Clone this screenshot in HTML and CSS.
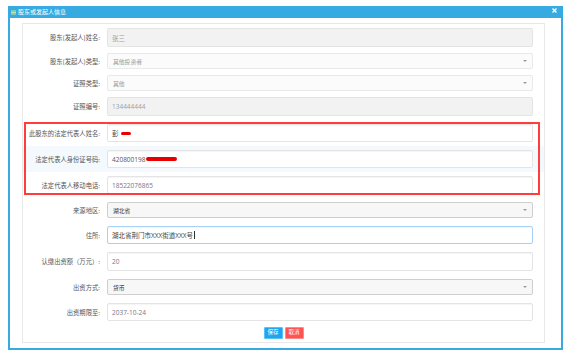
FILE: index.html
```html
<!DOCTYPE html>
<html lang="zh-CN">
<head>
<meta charset="utf-8">
<title>股东或发起人信息</title>
<link rel="stylesheet" href="styles.css">
</head>
<body>
<div class="dialog">
  <div class="titlebar">
    <svg class="title-icon" width="5" height="5" viewBox="0 0 5 5"><rect x="0" y="0.5" width="5" height="1" fill="#c9e79b"/><rect x="0" y="2" width="5" height="1" fill="#c9e79b"/><rect x="0" y="3.5" width="5" height="1" fill="#c9e79b"/></svg>
    <span class="title">股东或发起人信息</span>
    <svg class="close" width="5" height="5" viewBox="0 0 5 5"><path d="M0.5 0.5L4.5 4.5M4.5 0.5L0.5 4.5" stroke="#fff" stroke-width="1.4"/></svg>
  </div>
  <div class="body">
    <div class="panel">
      <div class="block upper">
        <div class="row"><span class="label">股东(发起人)姓名:</span><div class="field ro tall">张三</div></div>
        <div class="row"><span class="label">股东(发起人)类型:</span><div class="field sel dis">其他投资者<i class="caret"></i></div></div>
        <div class="row"><span class="label">证照类型:</span><div class="field sel dis">其他<i class="caret"></i></div></div>
        <div class="row"><span class="label">证照编号:</span><div class="field ro tall">134444444</div></div>
      </div>
      <div class="block marked">
        <div class="row pad"><span class="label">此股东的法定代表人姓名:</span><div class="field txt dark">彭<span class="redact r1"></span></div></div>
        <div class="row pad hover"><span class="label">法定代表人身份证号码:</span><div class="field txt mid">420800198<span class="redact r2"></span></div></div>
        <div class="row pad"><span class="label">法定代表人移动电话:</span><div class="field txt">18522076865</div></div>
      </div>
      <div class="block lower">
        <div class="row"><span class="label">来源地区:</span><div class="field sel on">湖北省<i class="caret"></i></div></div>
        <div class="row"><span class="label">住所:</span><div class="field txt focus dark">湖北省荆门市XXX街道XXX号<span class="cursor"></span></div></div>
        <div class="row"><span class="label">认缴出资额（万元）:</span><div class="field txt tall">20</div></div>
        <div class="row"><span class="label">出资方式:</span><div class="field sel on">货币<i class="caret"></i></div></div>
        <div class="row"><span class="label">出资期限至:</span><div class="field txt">2037-10-24</div></div>
      </div>
      <div class="actions">
        <button class="btn save">保存</button>
        <button class="btn cancel">取消</button>
      </div>
    </div>
  </div>
</div>
</body>
</html>
```

FILE: styles.css
```css
html, body {
  margin: 0;
  padding: 0;
  background: #fff;
}
body {
  font-family: "Open Sans", "Noto Sans CJK SC", sans-serif;
  width: 571px;
  height: 354px;
  overflow: hidden;
}
.dialog {
  margin: 6px 0 0 8px;
  width: 555px;
}
.titlebar {
  height: 12px;
  background: #36aae1;
  display: flex;
  align-items: center;
  padding: 0 6px 0 3px;
  gap: 2px;
}
.title-icon {
  display: block;
  margin-top: 1px;
}
.title {
  color: #fff;
  font-size: 6px;
  line-height: 1;
  font-family: "Noto Sans CJK SC", sans-serif;
  flex: 1;
}
.close {
  display: block;
  margin-top: -3px;
}
.body {
  border: 2px solid #36aae1;
  border-top: 0;
  padding: 5px 16px 5px 12px;
}
.panel {
  border: 1px solid #e8e8e8;
  padding: 4px 0 3px 0;
}
.block {
  display: flex;
  flex-direction: column;
}
.upper { gap: 6px; }
.marked {
  position: relative;
  margin-top: 4px;
}
.marked::after {
  content: "";
  position: absolute;
  left: 1px;
  right: 4px;
  top: 2px;
  bottom: 3px;
  border: 2px solid #ff3d3d;
  pointer-events: none;
}
.lower {
  gap: 8px;
  margin-top: 4px;
}
.row {
  display: flex;
  align-items: center;
  gap: 7px;
  padding-right: 11px;
}
.row.pad {
  padding-top: 4px;
  padding-bottom: 4px;
}
.row.hover {
  background: #f3f9fd;
}
.label {
  width: 77px;
  flex: none;
  text-align: right;
  font-size: 6.3px;
  color: #555;
  font-family: "Noto Sans CJK SC", sans-serif;
  white-space: nowrap;
}
.field {
  flex: 1;
  height: 18px;
  box-sizing: border-box;
  border: 1px solid #e4e4e4;
  border-radius: 2px;
  display: flex;
  align-items: center;
  padding-left: 4px;
  font-size: 6.5px;
  color: #778;
  position: relative;
  font-family: "Open Sans", "Noto Sans CJK SC", sans-serif;
}
.field.tall { height: 19px; }
.field.ro {
  background: #f2f2f2;
  color: #a0a0a0;
}
.field.txt {
  background: #fff;
  box-shadow: inset 0 1px 1px rgba(0,0,0,0.04);
}
.field.dark { color: #444; }
.field.mid { color: #556; }
.field.focus {
  border-color: #a9d1f4;
}
.field.sel {
  height: 16px;
  font-size: 5.8px;
  padding-left: 5px;
}
.field.dis {
  background: #fbfbfb;
  border-color: #e9e9e9;
  color: #9a9a9a;
}
.field.on {
  background: #f7f7f7;
  border-color: #cfcfcf;
  color: #333;
}
.caret {
  position: absolute;
  right: 5px;
  top: 50%;
  margin-top: -1px;
  width: 0;
  height: 0;
  border-left: 2px solid transparent;
  border-right: 2px solid transparent;
  border-top: 2px solid #999;
}
.redact {
  display: inline-block;
  background: #e80000;
  border-radius: 2px;
}
.redact.r1 {
  width: 10px;
  height: 3px;
  margin-left: 2px;
}
.redact.r2 {
  width: 31px;
  height: 4px;
  margin-left: 1px;
  border-radius: 3px;
}
.cursor {
  display: inline-block;
  width: 0.6px;
  height: 8px;
  background: #333;
  margin-left: 1px;
}
.actions {
  display: flex;
  justify-content: center;
  gap: 2px;
  margin-top: 6px;
}
.btn {
  height: 12px;
  width: 19px;
  padding: 0;
  border: 1px solid;
  border-radius: 1px;
  color: #fff;
  font-size: 5.5px;
  font-family: "Noto Sans CJK SC", sans-serif;
  line-height: 1;
}
.btn.save {
  background: #1ea6ef;
  border-color: #5bc0f5;
}
.btn.cancel {
  background: #ff5252;
  border-color: #ff8a8a;
}
```
